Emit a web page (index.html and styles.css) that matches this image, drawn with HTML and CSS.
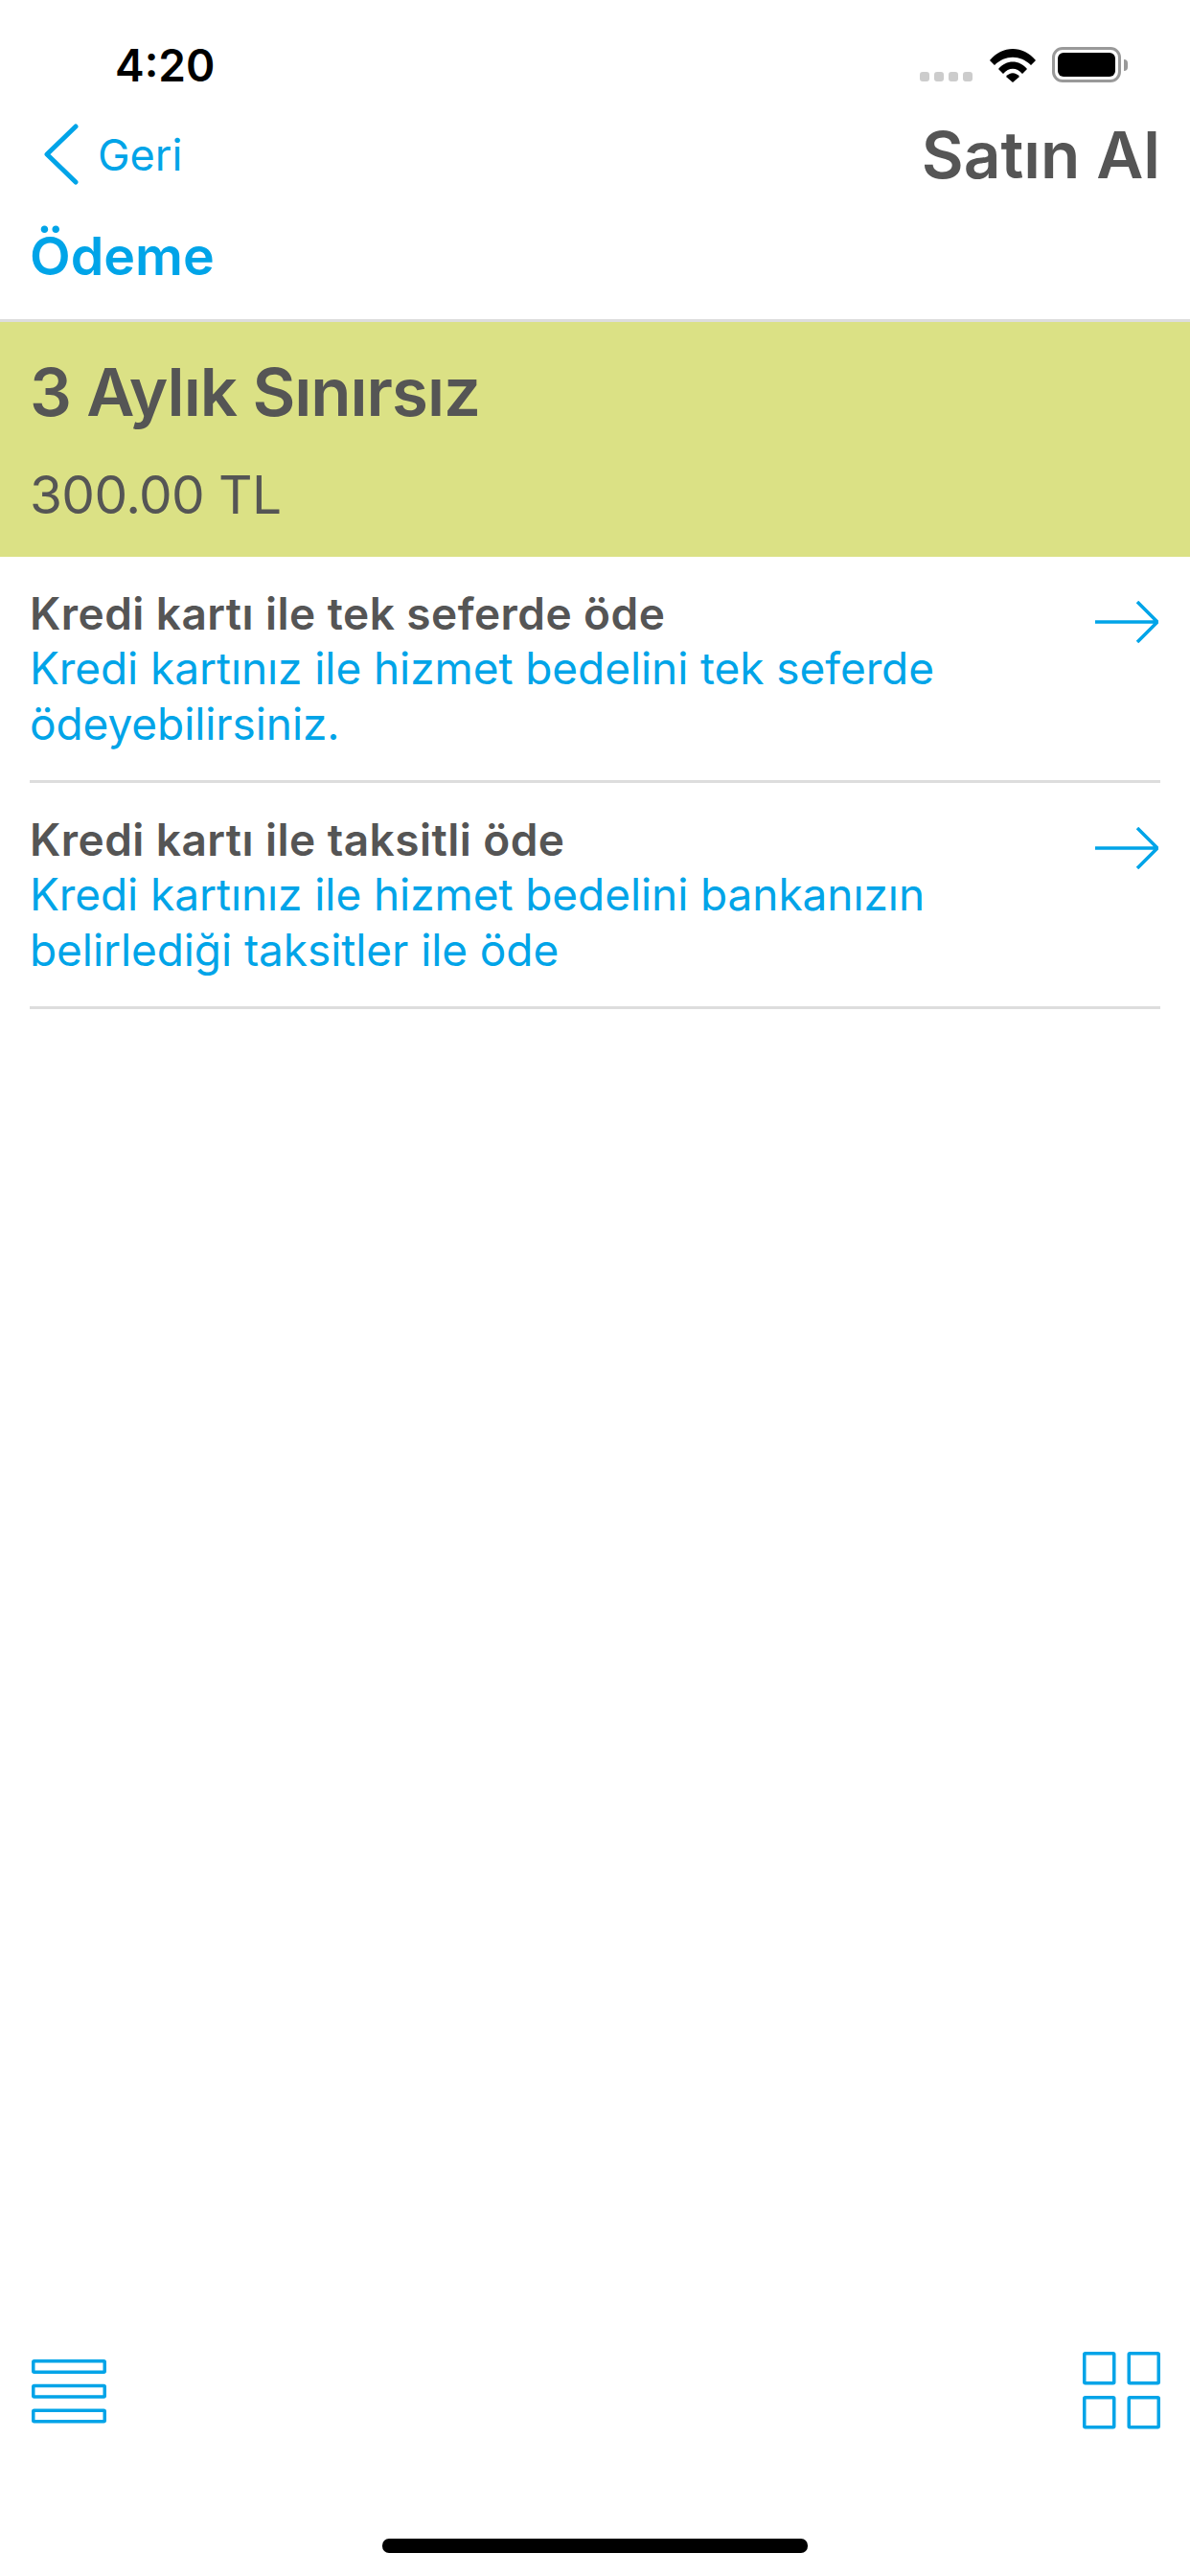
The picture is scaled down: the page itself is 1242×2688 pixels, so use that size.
FILE: index.html
```html
<!DOCTYPE html>
<html lang="tr">
<head>
  <meta charset="UTF-8">
  <meta name="viewport" content="width=device-width, initial-scale=1.0">
  <title>Satın Al</title>
  <link rel="stylesheet" href="styles.css">
</head>
<body>
  <div class="page">
    <!-- Durum çubuğu -->
    <div class="status-bar">
      <span class="time">4:20</span>
      <div class="status-icons">
        <div class="signal"><i></i><i></i><i></i><i></i></div>
        <svg class="wifi" width="50" height="37" viewBox="0 0 50 37">
          <path d="M1 14 C14 -2 36 -2 49 14 L44 19 C33 8 17 8 6 19 Z"/>
          <path d="M10 23 C18 13 32 13 40 23 L35 28 C29 21 21 21 15 28 Z"/>
          <path d="M18 31 C22 26 28 26 32 31 L25 37 Z"/>
        </svg>
        <div class="battery"><div class="battery-fill"></div></div>
        <div class="battery-nub"></div>
      </div>
    </div>

    <!-- Üst menü -->
    <div class="nav">
      <a class="back">
        <svg width="36" height="64" viewBox="0 0 36 64">
          <path d="M33 3 L3 32 L33 61"/>
        </svg>
        <span>Geri</span>
      </a>
      <h1>Satın Al</h1>
    </div>

    <h2 class="section-title">Ödeme</h2>

    <div class="plan">
      <div class="plan-name">3 Aylık Sınırsız</div>
      <div class="plan-price">300.00 TL</div>
    </div>

    <div class="options">
      <div class="option">
        <div class="option-text">
          <div class="option-title">Kredi kartı ile tek seferde öde</div>
          <div class="option-desc">Kredi kartınız ile hizmet bedelini tek seferde ödeyebilirsiniz.</div>
        </div>
        <svg class="arrow" width="66" height="44" viewBox="0 0 66 44">
          <path d="M0 22 H65 M44 1 L65 22 L44 43"/>
        </svg>
      </div>
      <div class="option">
        <div class="option-text">
          <div class="option-title">Kredi kartı ile taksitli öde</div>
          <div class="option-desc">Kredi kartınız ile hizmet bedelini bankanızın belirlediği taksitler ile öde</div>
        </div>
        <svg class="arrow" width="66" height="44" viewBox="0 0 66 44">
          <path d="M0 22 H65 M44 1 L65 22 L44 43"/>
        </svg>
      </div>
    </div>

    <!-- Alt butonlar -->
    <div class="bottom-bar">
      <svg class="icon-list" width="78" height="67" viewBox="0 0 78 67">
        <rect x="1.75" y="1.75" width="74.5" height="11.5" rx="1"/>
        <rect x="1.75" y="27.5" width="74.5" height="11.5" rx="1"/>
        <rect x="1.75" y="53.25" width="74.5" height="11.5" rx="1"/>
      </svg>
      <svg class="icon-grid" width="82" height="81" viewBox="0 0 82 81">
        <rect x="1.75" y="1.75" width="31" height="31" rx="1"/>
        <rect x="48.25" y="1.75" width="31" height="31" rx="1"/>
        <rect x="1.75" y="47.75" width="31" height="31" rx="1"/>
        <rect x="48.25" y="47.75" width="31" height="31" rx="1"/>
      </svg>
    </div>

    <div class="home-indicator"></div>
  </div>
</body>
</html>
```

FILE: styles.css
```css
* {
  box-sizing: border-box;
}

body {
  margin: 0;
  font-family: Inter, 'Noto Sans', sans-serif;
  background-color: #fff;
  color: #555;
}

.page {
  display: flex;
  flex-direction: column;
  width: 1242px;
  height: 2688px;
}

.status-bar {
  display: flex;
  justify-content: space-between;
  align-items: flex-start;
  height: 122px;
  padding: 42px 65px 0 120px;
}

.time {
  font-size: 46px;
  font-weight: 600;
  line-height: 52px;
  color: #000;
}

.status-icons {
  display: flex;
  align-items: flex-end;
  padding-top: 7px;
}

.signal {
  display: flex;
  gap: 5px;
  margin-right: 17px;
  margin-bottom: 1px;
}

.signal i {
  width: 10px;
  height: 10px;
  border-radius: 3px;
  background-color: #ccc;
}

.wifi {
  display: block;
  margin-right: 16px;
  fill: #000;
}

.battery {
  width: 72px;
  height: 37px;
  padding: 3px;
  border: 3px solid #999;
  border-radius: 11px;
}

.battery-fill {
  width: 100%;
  height: 100%;
  border-radius: 6px;
  background-color: #000;
}

.battery-nub {
  align-self: center;
  width: 4px;
  height: 12px;
  margin-left: 3px;
  border-radius: 0 6px 6px 0;
  background-color: #999;
}

.nav {
  display: flex;
  justify-content: space-between;
  align-items: center;
  height: 78px;
  padding: 0 31px 0 46px;
}

.back {
  display: flex;
  align-items: center;
  gap: 20px;
  color: #00a4e8;
  font-size: 45px;
}

.back svg {
  display: block;
  fill: none;
  stroke: #00a4e8;
  stroke-width: 5;
  stroke-linecap: round;
  stroke-linejoin: round;
}

.nav h1 {
  margin: 0;
  font-size: 67.5px;
  font-weight: 600;
}

.section-title {
  margin: 0;
  height: 136px;
  padding: 0 31px;
  font-size: 55.5px;
  font-weight: 600;
  line-height: 133px;
  color: #00a4e8;
  border-bottom: 3px solid #ddd;
}

.plan {
  height: 245px;
  padding: 31px 31px 0;
  background-color: #dbe185;
}

.plan-name {
  font-size: 69px;
  font-weight: 600;
  line-height: 84px;
  letter-spacing: -1px;
}

.plan-price {
  margin-top: 32px;
  font-size: 55px;
  line-height: 66px;
  letter-spacing: -0.6px;
}

.options {
  flex: 1;
  padding: 0 31px;
}

.option {
  display: flex;
  justify-content: space-between;
  align-items: flex-start;
  height: 236px;
  padding-top: 30px;
  border-bottom: 3px solid #ddd;
}

.option-text {
  flex: 1;
  padding-right: 70px;
}

.option-title {
  font-size: 46px;
  font-weight: 600;
  line-height: 58px;
  letter-spacing: 0.45px;
}

.option-desc {
  font-size: 46px;
  line-height: 57.5px;
  letter-spacing: -0.08px;
  color: #00a4e8;
}

.arrow {
  flex-shrink: 0;
  margin-top: 16px;
  margin-right: 2px;
  fill: none;
  stroke: #00a4e8;
  stroke-width: 3.5;
}

.bottom-bar {
  display: flex;
  justify-content: space-between;
  align-items: flex-end;
  padding: 0 30px 0 33px;
  margin-bottom: 114px;
}

.bottom-bar svg {
  display: block;
  fill: none;
  stroke: #00a4e8;
  stroke-width: 3.5;
}

.icon-list {
  margin-bottom: 6px;
}

.home-indicator {
  align-self: center;
  width: 444px;
  height: 15px;
  margin-bottom: 24px;
  border-radius: 7px;
  background-color: #000;
}
```
